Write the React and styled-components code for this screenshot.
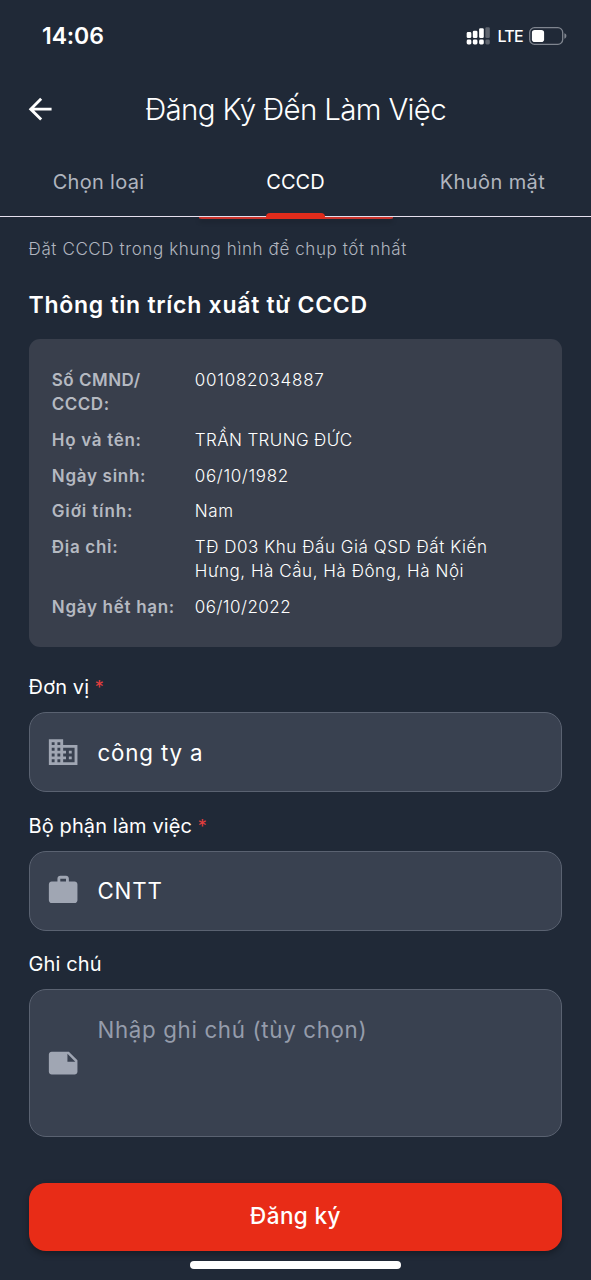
import React, { useState } from "react";
import styled, { createGlobalStyle } from "styled-components";
import { MdArrowBack, MdBusiness, MdNote, MdWork } from "react-icons/md";

const GlobalStyle = createGlobalStyle`
  * {
    box-sizing: border-box;
  }

  body {
    margin: 0;
    background-color: #202937;
    font-family: Inter, "Noto Sans", sans-serif;
    color: #ffffff;
  }
`;

const Screen = styled.div`
  height: 1280px;
  overflow: hidden;
  background-color: #202937;
  display: flex;
  flex-direction: column;
`;

// Status bar
const StatusBar = styled.div`
  height: 72px;
  flex-shrink: 0;
  padding: 0 24px 0 42px;
  display: flex;
  align-items: center;
  justify-content: space-between;
`;

const Clock = styled.span`
  font-size: 23px;
  font-weight: 600;
  letter-spacing: -0.1px;
`;

const StatusIcons = styled.div`
  display: flex;
  align-items: center;
`;

const Network = styled.span`
  font-size: 16px;
  font-weight: 500;
  letter-spacing: -0.7px;
  margin: 0 6px 0 7px;
`;

// App bar
const AppBar = styled.header`
  height: 74px;
  flex-shrink: 0;
  padding: 0 23px;
  display: grid;
  grid-template-columns: 35px 1fr 35px;
  align-items: center;
`;

const BackButton = styled.button`
  display: flex;
  padding: 0;
  border: none;
  background: none;
  color: #ffffff;
  font-size: 34.3px;
`;

const Title = styled.h1`
  margin: 0;
  text-align: center;
  font-size: 29.5px;
  font-weight: 350;
  letter-spacing: -0.68px;
  white-space: nowrap;
`;

// Tabs
const Tabs = styled.nav`
  height: 71px;
  flex-shrink: 0;
  display: grid;
  grid-template-columns: repeat(3, 1fr);
  border-bottom: 1.5px solid #e6e0ee;
`;

const Tab = styled.button`
  position: relative;
  padding: 0;
  border: none;
  background: none;
  font-family: inherit;
  font-size: 20px;
  line-height: 72px;
  letter-spacing: ${(props) => props.$spacing || "0.3px"};
  color: ${(props) => (props.$active ? "#ffffff" : "#b0b5bf")};
`;

const Indicator = styled.span`
  position: absolute;
  left: 50%;
  bottom: -1px;
  width: 59px;
  height: 6px;
  margin-left: -30px;
  border-radius: 4px 4px 0 0;
  background-color: #e02c1c;
`;

// Content, scrolled under the tabs
const Content = styled.main`
  flex: 1;
  padding: 0 28.6px;
  display: flex;
  flex-direction: column;
`;

const CaptureButtonEdge = styled.div`
  width: 194px;
  height: 1.5px;
  flex-shrink: 0;
  align-self: center;
  border-radius: 0 0 5px 5px / 0 0 1px 1px;
  background-color: #cb332b;
  box-shadow: 0 3px 4px rgba(0, 0, 0, 0.25);
`;

const Hint = styled.p`
  margin: 18.5px 0 0;
  font-size: 17px;
  font-weight: 300;
  line-height: 24px;
  letter-spacing: 0.6px;
  color: #b0b5bf;
  white-space: nowrap;
`;

const SectionTitle = styled.h2`
  margin: 27px 0 0;
  font-size: 23px;
  font-weight: 600;
  line-height: 34px;
  letter-spacing: 0.73px;
  white-space: nowrap;
`;

const InfoCard = styled.dl`
  margin: 17px 0 0;
  padding: 23.2px 23.2px 22px;
  border-radius: 11px;
  background-color: #393f4c;
`;

const InfoRow = styled.div`
  display: grid;
  grid-template-columns: 143px 1fr;
  padding: 5.75px 0;
  font-size: 17px;
  line-height: 24.2px;
`;

const InfoLabel = styled.dt`
  font-weight: 600;
  letter-spacing: ${(props) => props.$spacing || "0.7px"};
  color: #b5b9c1;
  white-space: pre-line;
`;

const InfoValue = styled.dd`
  margin: 0;
  font-weight: 350;
  letter-spacing: ${(props) => props.$spacing || "0.55px"};
  white-space: pre-line;
`;

const FieldLabel = styled.label`
  margin-top: ${(props) => props.$top || "19.7px"};
  height: 29px;
  font-size: 20px;
  line-height: 29px;
  letter-spacing: 0.1px;
`;

const Required = styled.span`
  font-size: 18px;
  color: #e53e3e;
`;

const Field = styled.div`
  height: ${(props) => (props.$multiline ? "148px" : "80px")};
  margin-top: 9.8px;
  padding: 0 19px 0 16.2px;
  display: flex;
  align-items: center;
  gap: 17.4px;
  border: 1.4px solid #5a6271;
  border-radius: 17px;
  background-color: #394150;
  color: #a0a6b3;

  svg {
    flex-shrink: 0;
    font-size: 34.3px;
  }
`;

const inputStyles = `
  flex: 1;
  min-width: 0;
  padding: 0;
  border: none;
  outline: none;
  background: none;
  font-family: inherit;
  font-size: 22.3px;
  color: #ffffff;
`;

const Input = styled.input`
  ${inputStyles}
  letter-spacing: 0.85px;
`;

const TextArea = styled.textarea`
  ${inputStyles}
  height: 101px;
  line-height: 34px;
  letter-spacing: 0.67px;
  resize: none;
  overflow: hidden;

  &::placeholder {
    color: #959cab;
    opacity: 1;
  }
`;

const SubmitButton = styled.button`
  margin-top: 46px;
  height: 68px;
  flex-shrink: 0;
  border: none;
  border-radius: 17px;
  background-color: #e82c17;
  box-shadow: 0 3px 6px rgba(0, 0, 0, 0.3);
  font-family: inherit;
  font-size: 22.5px;
  font-weight: 500;
  letter-spacing: 0.4px;
  line-height: 66px;
  padding: 0 0 2px;
  color: #ffffff;
`;

const HomeIndicator = styled.div`
  width: 211px;
  height: 8px;
  margin: 10px auto 0;
  flex-shrink: 0;
  border-radius: 4px;
  background-color: #ffffff;
`;

const SignalIcon = () => (
  <svg width="24" height="18" viewBox="-0.7 0 24.700 18" fill="#ffffff">
    <rect x="0" y="5" width="4.8" height="6" rx="1.3" />
    <rect x="6.3" y="3.5" width="4.8" height="7.5" rx="1.3" />
    <rect x="12.8" y="1" width="4.8" height="10" rx="1.3" />
    <rect x="19.2" y="0" width="4.6" height="11" rx="1.3" opacity="0.28" />
    <rect x="0" y="12.7" width="4.8" height="5" rx="1.5" />
    <rect x="6.3" y="12.7" width="4.8" height="5" rx="1.5" />
    <rect x="12.8" y="12.7" width="4.8" height="5" rx="1.5" />
    <rect x="19.2" y="12.7" width="4.6" height="5" rx="1.5" opacity="0.28" />
  </svg>
);

const BatteryIcon = () => (
  <svg width="38" height="18" viewBox="0 0 38 18">
    <rect x="0.7" y="0.7" width="33" height="16.6" rx="4.8" fill="none" stroke="#7f858f" strokeWidth="1.3" />
    <rect x="2.9" y="2.9" width="12.2" height="12.2" rx="2.8" fill="#ffffff" />
    <path d="M35.4 6.3c1.4.5 2 1.5 2 2.7s-.6 2.2-2 2.7z" fill="#7f858f" />
  </svg>
);

const tabs = [
  { id: "type", label: "Chọn loại" },
  { id: "cccd", label: "CCCD", spacing: "0px" },
  { id: "face", label: "Khuôn mặt", spacing: "0.4px" },
];

const info = [
  { label: "Số CMND/\nCCCD:", value: "001082034887", labelSpacing: "0.5px", spacing: "0.75px" },
  { label: "Họ và tên:", value: "TRẦN TRUNG ĐỨC", spacing: "0.38px" },
  { label: "Ngày sinh:", value: "06/10/1982", spacing: "0.65px" },
  { label: "Giới tính:", value: "Nam", labelSpacing: "0.85px" },
  { label: "Địa chỉ:", value: "TĐ D03 Khu Đấu Giá QSD Đất Kiến\nHưng, Hà Cầu, Hà Đông, Hà Nội" },
  { label: "Ngày hết hạn:", value: "06/10/2022", spacing: "0.48px" },
];

const App = () => {
  const [activeTab, setActiveTab] = useState("cccd");
  const [company, setCompany] = useState("công ty a");
  const [department, setDepartment] = useState("CNTT");
  const [note, setNote] = useState("");

  return (
    <Screen>
      <GlobalStyle />
      <StatusBar>
        <Clock>14:06</Clock>
        <StatusIcons>
          <SignalIcon />
          <Network>LTE</Network>
          <BatteryIcon />
        </StatusIcons>
      </StatusBar>

      <AppBar>
        <BackButton>
          <MdArrowBack />
        </BackButton>
        <Title>Đăng Ký Đến Làm Việc</Title>
      </AppBar>

      <Tabs>
        {tabs.map((tab) => (
          <Tab
            key={tab.id}
            $active={tab.id === activeTab}
            $spacing={tab.spacing}
            onClick={() => setActiveTab(tab.id)}
          >
            {tab.label}
            {tab.id === activeTab && <Indicator />}
          </Tab>
        ))}
      </Tabs>

      <Content>
        <CaptureButtonEdge />
        <Hint>Đặt CCCD trong khung hình để chụp tốt nhất</Hint>

        {/* Extracted ID card data */}
        <SectionTitle>Thông tin trích xuất từ CCCD</SectionTitle>
        <InfoCard>
          {info.map((row) => (
            <InfoRow key={row.label}>
              <InfoLabel $spacing={row.labelSpacing}>{row.label}</InfoLabel>
              <InfoValue $spacing={row.spacing}>{row.value}</InfoValue>
            </InfoRow>
          ))}
        </InfoCard>

        {/* Registration form */}
        <FieldLabel $top="26.5px" htmlFor="company">
          Đơn vị <Required>*</Required>
        </FieldLabel>
        <Field>
          <MdBusiness />
          <Input id="company" value={company} onChange={(e) => setCompany(e.target.value)} />
        </Field>

        <FieldLabel htmlFor="department">
          Bộ phận làm việc <Required>*</Required>
        </FieldLabel>
        <Field>
          <MdWork />
          <Input id="department" value={department} onChange={(e) => setDepartment(e.target.value)} />
        </Field>

        <FieldLabel htmlFor="note">Ghi chú</FieldLabel>
        <Field $multiline>
          <MdNote />
          <TextArea
            id="note"
            placeholder="Nhập ghi chú (tùy chọn)"
            value={note}
            onChange={(e) => setNote(e.target.value)}
          />
        </Field>

        <SubmitButton>Đăng ký</SubmitButton>
        <HomeIndicator />
      </Content>
    </Screen>
  );
};

export default App;
